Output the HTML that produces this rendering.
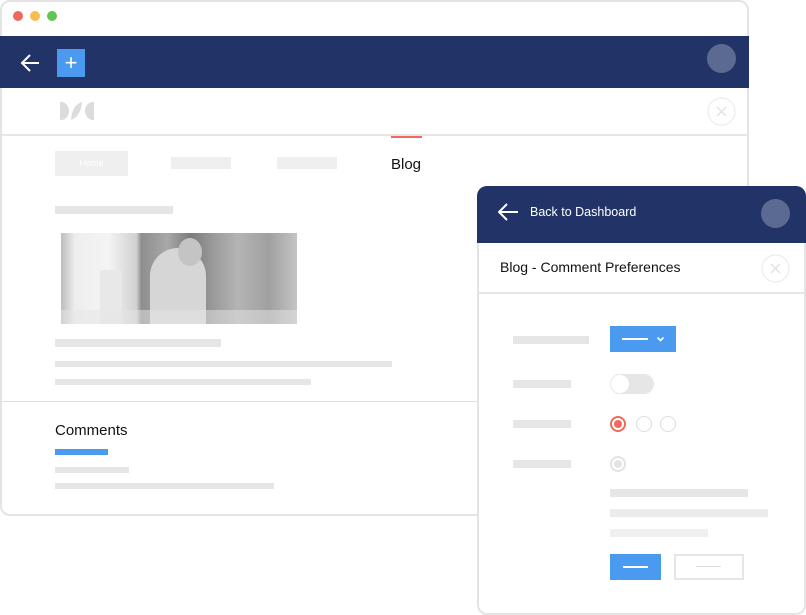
<!DOCTYPE html>
<html><head><style>
*{margin:0;padding:0;box-sizing:border-box}
body{width:806px;height:615px;background:#fff;position:relative;overflow:hidden;font-family:"Liberation Sans",sans-serif}
.a{position:absolute}
.g{position:absolute;background:#e6e6e6}
</style></head><body>
<div class="a" style="left:0;top:0;width:749px;height:516px;border:2px solid #e4e4e4;border-radius:10px;background:#fff"></div>
<div class="a" style="left:13px;top:11px;width:10px;height:10px;border-radius:50%;background:#ee6a5f"></div>
<div class="a" style="left:30px;top:11px;width:10px;height:10px;border-radius:50%;background:#f5be4f"></div>
<div class="a" style="left:47px;top:11px;width:10px;height:10px;border-radius:50%;background:#62c654"></div>
<div class="a" style="left:0;top:36px;width:749px;height:52px;background:#223367"></div>
<svg class="a" style="left:20px;top:53px" width="20" height="20" viewBox="0 0 20 20"><path d="M19 10H2M10 2L2 10L10 18" stroke="#fff" stroke-width="2" fill="none"/></svg>
<div class="a" style="left:57px;top:49px;width:28px;height:28px;background:#4a9af0;color:#fff;font-size:22px;line-height:27px;text-align:center">+</div>
<div class="a" style="left:707px;top:44px;width:29px;height:29px;border-radius:50%;background:#5b6a91"></div>
<svg class="a" style="left:60px;top:102px" width="34" height="18" viewBox="0 0 34 18"><path d="M0 0h1a8 9 0 0 1 0 18H0z" fill="#dcdcdc"/><path d="M11 18Q12 3 22 0Q21 14 11 18z" fill="#dcdcdc"/><path d="M34 0h-1a8 9 0 0 0 0 18h1z" fill="#dcdcdc"/></svg>
<svg class="a" style="left:707px;top:97px" width="29" height="29" viewBox="0 0 29 29"><circle cx="14.5" cy="14.5" r="13.5" fill="none" stroke="#e8e8e8"/><path d="M10 10l9 9M19 10l-9 9" stroke="#ddd" stroke-width="1.2"/></svg>
<div class="a" style="left:2px;top:134px;width:745px;height:2px;background:#e6e6e6"></div>
<div class="a" style="left:55px;top:151px;width:73px;height:25px;background:#efefef;color:#fff;font-size:9px;line-height:25px;text-align:center">Home</div>
<div class="g" style="left:171px;top:157px;width:60px;height:12px;background:#efefef"></div>
<div class="g" style="left:277px;top:157px;width:60px;height:12px;background:#efefef"></div>
<div class="a" style="left:391px;top:136px;width:31px;height:2px;background:#ee6a5f"></div>
<div class="a" style="left:391px;top:156px;font-size:15px;color:#111">Blog</div>
<div class="g" style="left:55px;top:206px;width:118px;height:8px"></div>
<div class="a" style="left:61px;top:233px;width:236px;height:91px;background:linear-gradient(90deg,#bdbdbd 0,#eeeeee 6%,#f4f4f4 20%,#d0d0d0 32%,#8e8e8e 34%,#a8a8a8 45%,#7c7c7c 55%,#9c9c9c 65%,#b4b4b4 75%,#a0a0a0 88%,#c4c4c4 100%)"></div>
<div class="a" style="left:150px;top:248px;width:56px;height:76px;border-radius:28px 28px 0 0;background:#d6d6d6"></div>
<div class="a" style="left:178px;top:238px;width:24px;height:28px;border-radius:50%;background:#c4c4c4"></div>
<div class="a" style="left:100px;top:270px;width:22px;height:54px;background:#e8e8e8"></div>
<div class="a" style="left:61px;top:310px;width:236px;height:14px;background:rgba(230,230,230,.5)"></div>
<div class="g" style="left:55px;top:339px;width:166px;height:8px"></div>
<div class="g" style="left:55px;top:361px;width:337px;height:6px"></div>
<div class="g" style="left:55px;top:379px;width:256px;height:6px"></div>
<div class="a" style="left:2px;top:401px;width:476px;height:1px;background:#e0e0e0"></div>
<div class="a" style="left:55px;top:422px;font-size:15px;color:#111">Comments</div>
<div class="a" style="left:55px;top:449px;width:53px;height:6px;background:#4a9af0"></div>
<div class="g" style="left:55px;top:467px;width:74px;height:6px"></div>
<div class="g" style="left:55px;top:483px;width:219px;height:6px"></div>

<div class="a" style="left:477px;top:186px;width:329px;height:429px;border:2px solid #e4e4e4;border-radius:10px;background:#fff"></div>
<div class="a" style="left:477px;top:186px;width:329px;height:57px;background:#223367;border-radius:10px 10px 0 0"></div>
<svg class="a" style="left:498px;top:203px" width="20" height="18" viewBox="0 0 20 18"><path d="M20 9H2M9 1L1 9L9 17" stroke="#fff" stroke-width="2" fill="none"/></svg>
<div class="a" style="left:530px;top:205px;font-size:12.5px;color:#fff">Back to Dashboard</div>
<div class="a" style="left:761px;top:199px;width:29px;height:29px;border-radius:50%;background:#5b6a91"></div>
<div class="a" style="left:500px;top:259px;font-size:14px;color:#111">Blog - Comment Preferences</div>
<svg class="a" style="left:761px;top:254px" width="29" height="29" viewBox="0 0 29 29"><circle cx="14.5" cy="14.5" r="13.5" fill="none" stroke="#e8e8e8"/><path d="M10 10l9 9M19 10l-9 9" stroke="#ddd" stroke-width="1.2"/></svg>
<div class="a" style="left:479px;top:292px;width:325px;height:2px;background:#e6e6e6"></div>
<div class="g" style="left:513px;top:336px;width:76px;height:8px"></div>
<div class="a" style="left:610px;top:326px;width:66px;height:26px;background:#4a9af0"></div>
<div class="a" style="left:622px;top:338px;width:26px;height:2px;background:#fff"></div>
<svg class="a" style="left:656px;top:336px" width="9" height="6" viewBox="0 0 9 6"><path d="M1.5 1.5l3 3 3-3" stroke="#fff" stroke-width="1.6" fill="none"/></svg>
<div class="g" style="left:513px;top:380px;width:58px;height:8px"></div>
<div class="a" style="left:610px;top:374px;width:44px;height:20px;border-radius:10px;background:#e6e6e6"></div>
<div class="a" style="left:611px;top:375px;width:18px;height:18px;border-radius:50%;background:#fff"></div>
<div class="g" style="left:513px;top:420px;width:58px;height:8px"></div>
<div class="a" style="left:610px;top:416px;width:16px;height:16px;border-radius:50%;border:2px solid #ee6a5f"></div>
<div class="a" style="left:614px;top:420px;width:8px;height:8px;border-radius:50%;background:#ee6a5f"></div>
<div class="a" style="left:636px;top:416px;width:16px;height:16px;border-radius:50%;border:1.5px solid #ddd"></div>
<div class="a" style="left:660px;top:416px;width:16px;height:16px;border-radius:50%;border:1.5px solid #ddd"></div>
<div class="g" style="left:513px;top:460px;width:58px;height:8px"></div>
<div class="a" style="left:610px;top:456px;width:16px;height:16px;border-radius:50%;border:2px solid #e3e3e3"></div>
<div class="a" style="left:614px;top:460px;width:8px;height:8px;border-radius:50%;background:#e3e3e3"></div>
<div class="g" style="left:610px;top:489px;width:138px;height:8px"></div>
<div class="g" style="left:610px;top:509px;width:158px;height:8px;background:#ececec"></div>
<div class="g" style="left:610px;top:529px;width:98px;height:8px;background:#f0f0f0"></div>
<div class="a" style="left:610px;top:554px;width:51px;height:26px;background:#4a9af0"></div>
<div class="a" style="left:623px;top:566px;width:25px;height:2px;background:#fff"></div>
<div class="a" style="left:674px;top:554px;width:70px;height:26px;border:2px solid #e6e6e6"></div>
<div class="a" style="left:696px;top:566px;width:25px;height:1px;background:#ddd"></div>
</body></html>
